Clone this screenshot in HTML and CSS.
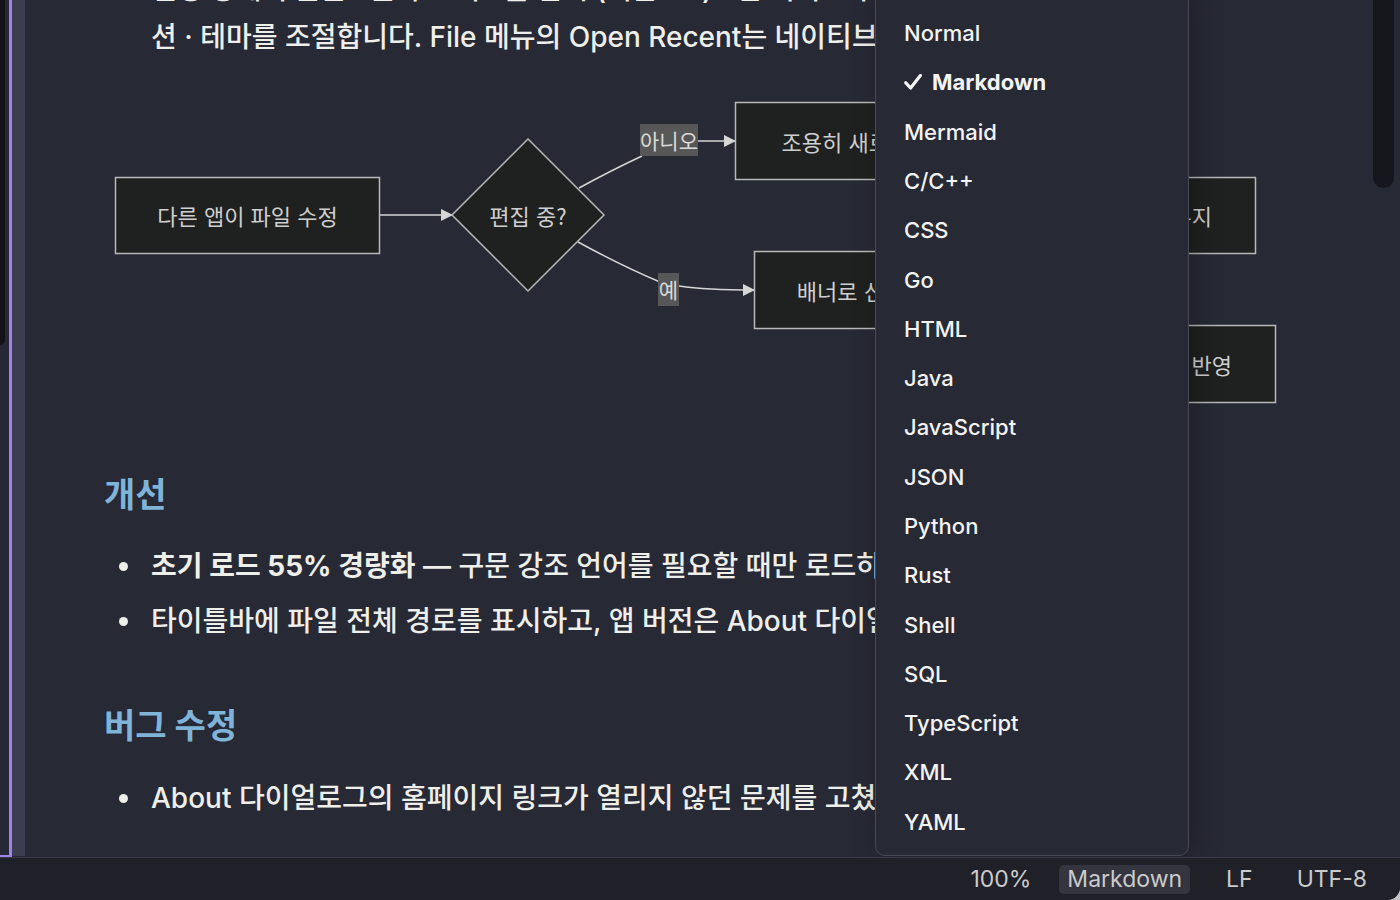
FILE: index.html
```html
<!DOCTYPE html>
<html lang="ko">
<head>
<meta charset="utf-8">
<title>Editor</title>
<link rel="stylesheet" href="styles.css">
</head>
<body>
<div class="window">
  <div class="main">
    <div class="side"><div class="side-top"></div></div>
    <div class="gutter"></div>
    <div class="editor">
      <div class="doc">
        <ul class="list list-top">
          <li class="item"><span class="lines"><span class="line">설정 창에서 글꼴 · 글자 크기 · 줄 간격 (기본 1.6) · 탭 너비 · 자동 저장 · 애니메이</span><span class="line">션 · 테마를 조절합니다. File 메뉴의 Open Recent는 네이티브 메뉴로</span></span></li>
        </ul>
        <svg class="flow" viewBox="25 80 1349 340" width="1349" height="340" xmlns="http://www.w3.org/2000/svg">
          <defs>
            <marker id="arrow" viewBox="0 0 12 12" refX="11" refY="6" markerWidth="12" markerHeight="12" markerUnits="userSpaceOnUse" orient="auto">
              <path d="M0 0 L12 6 L0 12 z" fill="#d6d6d6"/>
            </marker>
          </defs>
          <path class="edge" d="M380 215 L452 215" marker-end="url(#arrow)"/>
          <path class="edge" d="M579 188 Q 612 170 642 156"/>
          <path class="edge" d="M698 141 L735 141" marker-end="url(#arrow)"/>
          <path class="edge" d="M578 242 Q 622 266 660 282"/>
          <path class="edge" d="M679 286 Q 706 290 754 290" marker-end="url(#arrow)"/>
          <path class="edge" d="M975 141 Q 990 160 1000 200"/>
          <path class="edge" d="M945 290 Q 980 330 1010 360"/>

          <rect class="node" x="115.5" y="177.5" width="264" height="76"/>
          <text class="nlabel" x="247.5" y="215">다른 앱이 파일 수정</text>

          <polygon class="node" points="528,139 604,215 528,291 452,215"/>
          <text class="nlabel" x="528" y="215">편집 중?</text>

          <rect class="elabel-bg" x="640" y="124" width="58" height="32"/>
          <text class="elabel" x="669" y="140">아니오</text>
          <rect class="elabel-bg" x="658" y="273" width="21" height="33"/>
          <text class="elabel" x="668.5" y="289">예</text>

          <rect class="node" x="735.5" y="102.5" width="240" height="77"/>
          <text class="nlabel" x="855.5" y="141">조용히 새로고침</text>

          <rect class="node" x="754.5" y="251.5" width="192" height="77"/>
          <text class="nlabel" x="850.5" y="290">배너로 신호</text>

          <rect class="node" x="1000.5" y="177.5" width="255" height="76"/>
          <text class="nlabel end" x="1212" y="215">스크롤 위치 유지</text>

          <rect class="node" x="1010.5" y="325.5" width="265" height="77"/>
          <text class="nlabel end" x="1232" y="364">변경 내용 반영</text>
        </svg>

        <h2 class="heading">개선</h2>
        <ul class="list">
          <li class="item"><span class="lines"><span class="line"><strong>초기 로드 55% 경량화</strong> — 구문 강조 언어를 필요할 때만 로드하여 시작이 빨라졌습니다</span></span></li>
          <li class="item"><span class="lines"><span class="line">타이틀바에 파일 전체 경로를 표시하고, 앱 버전은 About 다이얼로그로 옮겼습니다</span></span></li>
        </ul>

        <h2 class="heading heading-2">버그 수정</h2>
        <ul class="list list-last">
          <li class="item"><span class="lines"><span class="line">About 다이얼로그의 홈페이지 링크가 열리지 않던 문제를 고쳤습니다.</span></span></li>
        </ul>
      </div>

      <div class="scroll-thumb"></div>

      <div class="menu">
        <div class="menu-item">Normal</div>
        <div class="menu-item selected"><svg class="check" width="18" height="16" viewBox="0 0 18 16" xmlns="http://www.w3.org/2000/svg"><path d="M1.8 8.8 L6.6 14 L16.4 1.6" fill="none" stroke="#f4f4f4" stroke-width="3.2" stroke-linecap="round" stroke-linejoin="round"/></svg>Markdown</div>
        <div class="menu-item">Mermaid</div>
        <div class="menu-item">C/C++</div>
        <div class="menu-item">CSS</div>
        <div class="menu-item">Go</div>
        <div class="menu-item">HTML</div>
        <div class="menu-item">Java</div>
        <div class="menu-item">JavaScript</div>
        <div class="menu-item">JSON</div>
        <div class="menu-item">Python</div>
        <div class="menu-item">Rust</div>
        <div class="menu-item">Shell</div>
        <div class="menu-item">SQL</div>
        <div class="menu-item">TypeScript</div>
        <div class="menu-item">XML</div>
        <div class="menu-item">YAML</div>
      </div>
    </div>
  </div>
  <div class="status">
    <span class="status-item zoom">100%</span>
    <span class="status-item pill">Markdown</span>
    <span class="status-item eol">LF</span>
    <span class="status-item enc">UTF-8</span>
  </div>
</div>
</body>
</html>
```

FILE: styles.css
```css
* { box-sizing: border-box; }

html, body {
  margin: 0;
  padding: 0;
  width: 1400px;
  height: 900px;
  overflow: hidden;
}

body {
  background: #c4c4c4;
  font-family: Inter, "Noto Sans CJK KR", sans-serif;
}

.window {
  width: 1400px;
  height: 900px;
  display: flex;
  flex-direction: column;
  background: #272935;
  border-bottom-right-radius: 13px;
  overflow: hidden;
}

.main {
  height: 857px;
  display: flex;
  flex-direction: row;
}

.side {
  width: 12px;
  flex: none;
  background: #272835;
  border-right: 3px solid #9d82ec;
  border-bottom: 2px solid #9d82ec;
}

.side-top {
  width: 5px;
  height: 345px;
  background: #131418;
  border-bottom-right-radius: 5px;
}

.gutter {
  width: 13px;
  flex: none;
  height: 856px;
  background: #3c3d50;
}

.editor {
  flex: 1;
  position: relative;
  overflow: hidden;
  background: #272935;
}

.doc {
  margin-top: -35px;
  padding-left: 79px;
  color: #eeeeea;
}

.list {
  list-style: none;
  margin: 24px 0 0 0;
  padding: 0;
}

.list-top { margin-top: 0; }
.list-last { margin-top: 25px; }

.item {
  display: flex;
  align-items: flex-start;
  font-size: 28px;
  font-weight: 500;
  line-height: 45px;
  margin-bottom: 10px;
}

.list-top .item { line-height: 48px; }

.item::before {
  content: "";
  flex: none;
  width: 9px;
  height: 9px;
  border-radius: 50%;
  background: #efefea;
  margin: 18px 23px 0 15px;
}

.list-top .item::before { visibility: hidden; }

.lines {
  display: flex;
  flex-direction: column;
}

.line {
  display: block;
  white-space: nowrap;
  overflow: hidden;
  max-width: 1030px;
}

.line strong { font-weight: 700; }

.flow {
  display: block;
  margin: 19px 0 0 -79px;
}

.edge {
  fill: none;
  stroke: #d6d6d6;
  stroke-width: 1.5;
}

.node {
  fill: #1f2020;
  stroke: #b8b8b8;
  stroke-width: 1.5;
}

.nlabel {
  fill: #cfcfcf;
  font-family: "Noto Sans CJK KR", Inter, sans-serif;
  font-size: 22px;
  text-anchor: middle;
  dominant-baseline: central;
}

.nlabel.end { text-anchor: end; }

.elabel-bg { fill: #575757; }

.elabel {
  fill: #dadada;
  font-family: "Noto Sans CJK KR", Inter, sans-serif;
  font-size: 21px;
  text-anchor: middle;
  dominant-baseline: central;
}

.heading {
  margin: 50px 0 0 0;
  font-size: 34px;
  line-height: 50px;
  font-weight: 700;
  color: #7fb4d8;
}

.heading-2 { margin-top: 57px; }

.scroll-thumb {
  position: absolute;
  left: 1348px;
  top: 0;
  width: 21px;
  height: 188px;
  background: #16171c;
  border-radius: 0 0 11px 11px;
}

.menu {
  position: absolute;
  left: 850px;
  top: -12px;
  width: 314px;
  height: 868px;
  padding-top: 19.4px;
  background: #272935;
  border: 1px solid #474959;
  border-radius: 10px;
  box-shadow: 6px 0 28px rgba(0, 0, 0, 0.28);
}

.menu-item {
  height: 49.3px;
  display: flex;
  align-items: center;
  padding-left: 28px;
  font-size: 22px;
  font-weight: 500;
  color: #f3f3f3;
}

.menu-item.selected { font-weight: 700; }

.check {
  margin-right: 10px;
  flex: none;
}

.status {
  height: 43px;
  display: flex;
  flex-direction: row;
  justify-content: flex-end;
  align-items: center;
  padding-right: 33px;
  background: #202128;
  border-top: 1px solid #3a3b48;
  color: #cbcbcb;
  font-size: 23px;
}

.status-item { line-height: 29px; }

.pill {
  margin-left: 28px;
  padding: 0 8px;
  background: #34353e;
  border-radius: 5px;
}

.eol { margin-left: 36px; }
.enc { margin-left: 44px; }
```
